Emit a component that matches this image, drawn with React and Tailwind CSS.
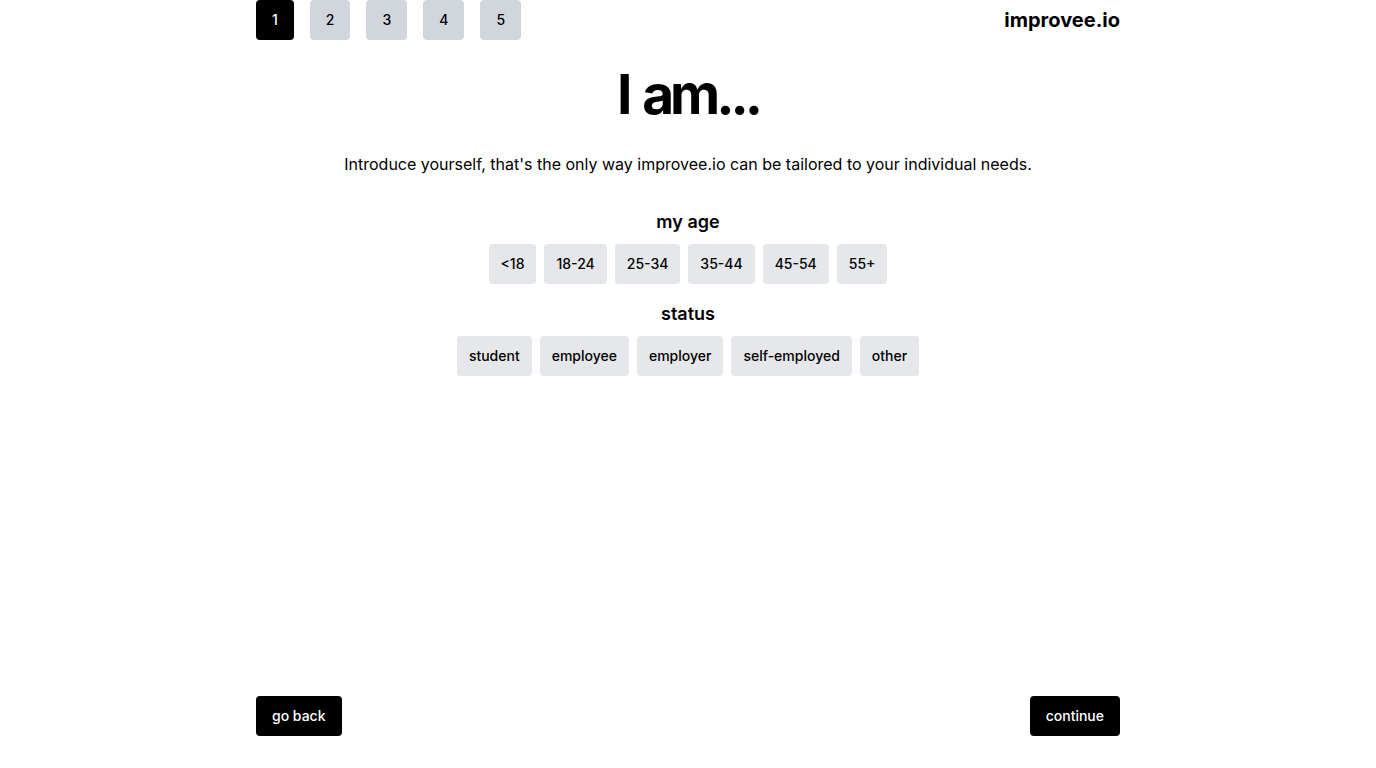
import React, { useState } from 'react';

const steps = [1, 2, 3, 4, 5];
const ages = ['<18', '18-24', '25-34', '35-44', '45-54', '55+'];
const statuses = ['student', 'employee', 'employer', 'self-employed', 'other'];

const Option = ({ label, active, onClick }) => (
  <button
    onClick={onClick}
    className={`h-10 px-3 rounded text-sm font-medium ${active ? 'bg-black text-white' : 'bg-gray-200 text-black'}`}
  >
    {label}
  </button>
);

const App = () => {
  const [age, setAge] = useState(null);
  const [status, setStatus] = useState(null);

  return (
    <div className="min-h-screen bg-white text-black font-['Inter',sans-serif] flex justify-center">
      <div className="w-[864px] h-[768px] flex flex-col pb-8">
        <div className="flex items-center justify-between">
          <div className="flex gap-4">
            {steps.map((s) => (
              <div
                key={s}
                className={`h-10 px-4 flex items-center justify-center rounded text-sm font-medium ${s === 1 ? 'bg-black text-white' : 'bg-gray-300 text-black'}`}
              >
                {s}
              </div>
            ))}
          </div>
          <div className="text-xl font-bold">improvee.io</div>
        </div>

        <div className="flex-1 flex flex-col items-center">
          <h1 className="mt-[22px] text-[55px] leading-[64px] font-bold tracking-[-0.075em] [word-spacing:5px]">I am...</h1>
          <p className="mt-[26px] text-base">
            Introduce yourself, that's the only way improvee.io can be tailored to your individual needs.
          </p>

          <h2 className="mt-8 text-lg font-semibold leading-7">my age</h2>
          <div className="mt-2 flex gap-2">
            {ages.map((a) => (
              <Option key={a} label={a} active={age === a} onClick={() => setAge(a)} />
            ))}
          </div>

          <h2 className="mt-4 text-lg font-semibold leading-7">status</h2>
          <div className="mt-2 flex gap-2">
            {statuses.map((s) => (
              <Option key={s} label={s} active={status === s} onClick={() => setStatus(s)} />
            ))}
          </div>
        </div>

        <div className="flex justify-between">
          <button className="h-10 px-4 rounded bg-black text-white text-sm font-medium">go back</button>
          <button className="h-10 px-4 rounded bg-black text-white text-sm font-medium">continue</button>
        </div>
      </div>
    </div>
  );
};

export default App;
